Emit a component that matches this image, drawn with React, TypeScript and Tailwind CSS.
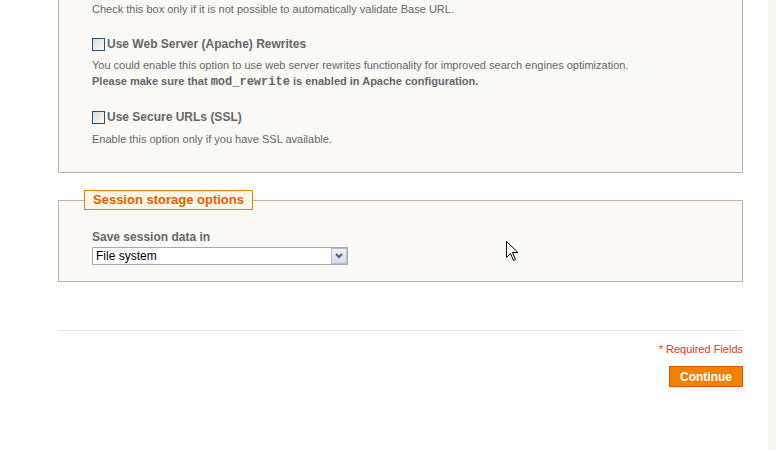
import React from "react";

function Checkbox() {
  return (
    <span className="inline-block w-[13px] h-[13px] border border-[#1c5180] bg-gradient-to-br from-[#dcdcd7] to-[#fbfbf9] mr-[2px] shrink-0" />
  );
}

function Cursor() {
  return (
    <svg width="14" height="22" viewBox="0 0 14 22" className="absolute left-[506px] top-[241px]">
      <path
        d="M0.5 0.5 L0.5 16.5 L4.5 12.5 L7.5 19.5 L9.5 18.5 L6.5 11.5 L12 11.5 Z"
        fill="#fff"
        stroke="#000"
        strokeWidth="1"
        strokeLinejoin="miter"
      />
    </svg>
  );
}

export default function App() {
  return (
    <div className="relative w-[776px] h-[450px] overflow-hidden bg-white flex font-['Liberation_Sans',Arial,sans-serif]">
      <div className="w-[768px] shrink-0">
        <div className="ml-[58px] w-[685px]">
          {/* Web access options */}
          <div className="border border-t-0 border-[#bcb2a4] bg-[#faf9f6] pl-[33px] pt-[2px] pb-[26px]">
            <p className="text-[11px] leading-[14px] text-[#666]">
              Check this box only if it is not possible to automatically validate Base URL.
            </p>

            <label className="mt-[20px] flex items-center h-[16px] text-[12px] font-bold text-[#666]">
              <Checkbox />
              Use Web Server (Apache) Rewrites
            </label>
            <p className="mt-[6px] text-[11px] leading-[14px] text-[#666]">
              You could enable this option to use web server rewrites functionality for improved search engines optimization.
            </p>
            <p className="mt-[2px] text-[11px] leading-[14px] font-bold text-[#666]">
              Please make sure that{" "}
              <code className="font-['Liberation_Mono','Courier_New',monospace] text-[12px]">mod_rewrite</code>{" "}
              is enabled in Apache configuration.
            </p>

            <label className="mt-[20px] flex items-center h-[16px] text-[12px] font-bold text-[#666]">
              <Checkbox />
              Use Secure URLs (SSL)
            </label>
            <p className="mt-[7px] text-[11px] leading-[14px] text-[#666]">
              Enable this option only if you have SSL available.
            </p>
          </div>

          {/* Session storage */}
          <fieldset className="mt-[17px] border border-[#bcb2a4] bg-[#faf9f6] pb-[16px]">
            <legend className="ml-[25px] px-[8px] border border-[#f18200] bg-[#fcf6e9] text-[13px] leading-[18px] font-bold text-[#e65f00]">
              Session storage options
            </legend>
            <div className="pl-[33px] pt-[19px]">
              <p className="text-[12px] leading-[16px] font-bold text-[#666]">Save session data in</p>
              <div className="mt-[2px] w-[256px] h-[18px] border border-[#a5acb2] bg-white flex items-center justify-between">
                <span className="pl-[3px] text-[12px] leading-[16px] text-black">File system</span>
                <span className="w-[16px] h-[16px] border border-[#b6bdd2] bg-gradient-to-b from-[#f0f1f5] to-[#d6dae6] flex items-center justify-center">
                  <svg width="8" height="6" viewBox="0 0 8 6">
                    <path d="M1 1 L4 4 L7 1" fill="none" stroke="#4d6185" strokeWidth="2" />
                  </svg>
                </span>
              </div>
            </div>
          </fieldset>

          <div className="mt-[48px] border-t border-[#e4e4e4]" />
          <p className="mt-[11px] text-right text-[11px] leading-[14px] text-[#eb340a]">* Required Fields</p>
          <div className="mt-[10px] flex justify-end">
            <button className="w-[74px] h-[21px] bg-[#f18200] border border-[#de5400] text-white text-[12px] font-bold leading-[18px]">
              Continue
            </button>
          </div>
        </div>
      </div>
      <div className="flex-1 bg-[#f5f5f3]" />
      <Cursor />
    </div>
  );
}
